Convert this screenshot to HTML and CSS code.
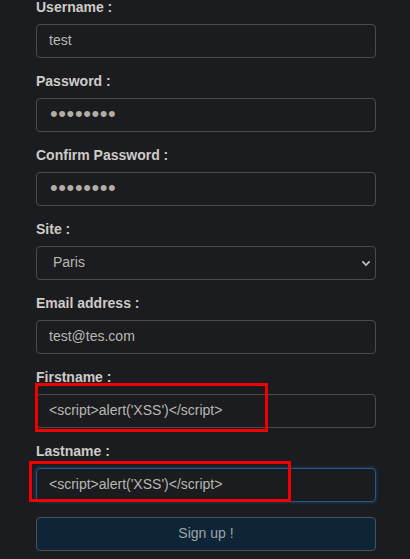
FILE: index.html
```html
<!DOCTYPE html>
<html lang="en">
<head>
<meta charset="utf-8">
<title>Sign up</title>
<link rel="stylesheet" href="styles.css">
</head>
<body>
<form class="signup">
  <div class="group">
    <label class="lbl">Username :</label>
    <input class="field" type="text" value="test">
  </div>
  <div class="group">
    <label class="lbl">Password :</label>
    <input class="field pw" type="password" value="12345678">
  </div>
  <div class="group">
    <label class="lbl">Confirm Password :</label>
    <input class="field pw" type="password" value="12345678">
  </div>
  <div class="group">
    <label class="lbl">Site :</label>
    <div class="select-wrap">
      <select class="field sel"><option>Paris</option></select>
      <svg class="chev" width="10" height="7" viewBox="0 0 10 7"><path d="M1.4 1.4 L5 5 L8.6 1.4" fill="none" stroke="#c4c4c4" stroke-width="1.6"/></svg>
    </div>
  </div>
  <div class="group">
    <label class="lbl">Email address :</label>
    <input class="field" type="text" value="test@tes.com">
  </div>
  <div class="group">
    <label class="lbl">Firstname :</label>
    <div class="mark-wrap">
      <input class="field" type="text" value="<script>alert('XSS')</script>">
      <span class="mark mark1"></span>
    </div>
  </div>
  <div class="group last">
    <label class="lbl">Lastname :</label>
    <div class="mark-wrap">
      <input class="field focus" type="text" value="<script>alert('XSS')</script>">
      <span class="mark mark2"></span>
    </div>
  </div>
  <button class="btn" type="button">Sign up !</button>
</form>
</body>
</html>
```
FILE: styles.css
```css
html, body {
  margin: 0;
  padding: 0;
  background: #1b1c1f;
  height: 100%;
  overflow: hidden;
}
body {
  font-family: "Liberation Sans", Arial, sans-serif;
  font-size: 14px;
}
.signup {
  width: 340px;
  margin: -3px 0 0 36px;
  display: flex;
  flex-direction: column;
}
.group {
  display: flex;
  flex-direction: column;
  margin-bottom: 13px;
}
.group.last {
  margin-bottom: 15px;
}
.lbl {
  font-weight: bold;
  color: #cdcbc8;
  line-height: 20px;
  height: 20px;
  margin-bottom: 7px;
}
.field {
  box-sizing: border-box;
  width: 340px;
  height: 34px;
  margin: 0;
  padding: 0 12px 3px;
  background: #1b1c1f;
  border: 1px solid #4a4b4d;
  border-radius: 4px;
  color: #b9b7b3;
  font-family: "Liberation Sans", Arial, sans-serif;
  font-size: 14px;
  outline: none;
}
.pw {
  color: #b3ada5;
  font-size: 22px;
  letter-spacing: 0.6px;
  padding: 0 12px 2px 13px;
}
.select-wrap {
  position: relative;
  height: 34px;
}
.sel {
  appearance: none;
  -webkit-appearance: none;
  padding-left: 16px;
}
.chev {
  position: absolute;
  right: 5px;
  top: 14px;
}
.mark-wrap {
  position: relative;
  height: 34px;
}
.mark {
  position: absolute;
  box-sizing: border-box;
  border: 3px solid #f20000;
  pointer-events: none;
}
.mark1 {
  left: -1px;
  top: -11px;
  width: 233px;
  height: 49px;
}
.mark2 {
  left: -7px;
  top: -7px;
  width: 262px;
  height: 41px;
}
.focus {
  border-color: #21598b;
  box-shadow: 0 0 3px 1px rgba(28, 92, 150, 0.45);
}
.btn {
  box-sizing: border-box;
  width: 340px;
  height: 34px;
  margin: 0;
  padding: 0 0 2px;
  background: #0d2536;
  border: 1px solid #4d5257;
  border-radius: 4px;
  color: #9da4aa;
  font-family: "Liberation Sans", Arial, sans-serif;
  font-size: 14px;
}
```
